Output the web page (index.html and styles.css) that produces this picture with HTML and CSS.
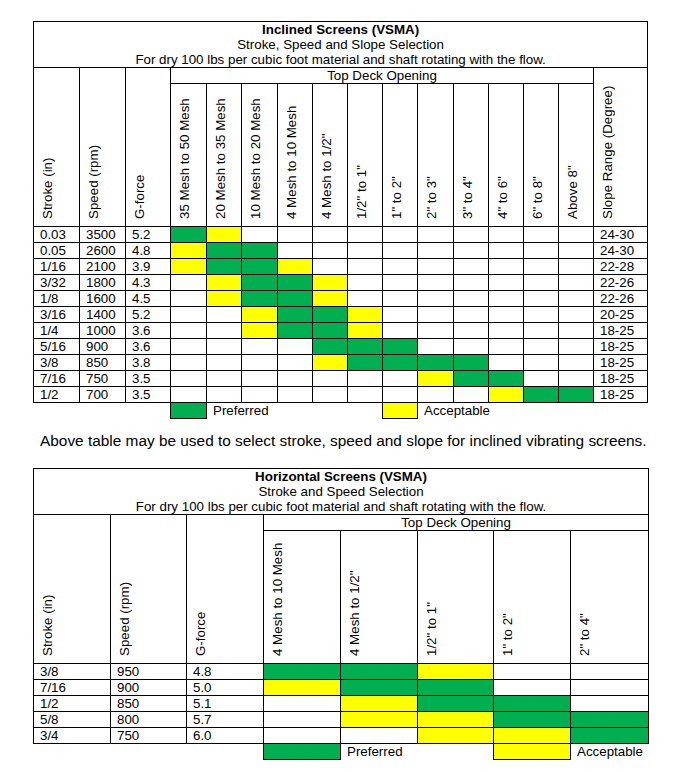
FILE: index.html
```html
<!DOCTYPE html>
<html>
<head>
<meta charset="utf-8">
<link rel="stylesheet" href="styles.css">
</head>
<body>
<div class="page">
  <table class="grid t1">
    <colgroup>
      <col style="width:46px"><col style="width:46px"><col style="width:45px">
      <col style="width:36px"><col style="width:35px"><col style="width:36px"><col style="width:35px">
      <col style="width:35px"><col style="width:35px"><col style="width:35px"><col style="width:36px">
      <col style="width:35px"><col style="width:35px"><col style="width:35px"><col style="width:35px">
      <col style="width:54px">
    </colgroup>
    <thead>
      <tr>
        <th colspan="16" class="title">
          <div class="b">Inclined Screens (VSMA)</div>
          <div>Stroke, Speed and Slope Selection</div>
          <div>For dry 100 lbs per cubic foot material and shaft rotating with the flow.</div>
        </th>
      </tr>
      <tr>
        <th rowspan="2" class="v"><div class="rot">Stroke (in)</div></th>
        <th rowspan="2" class="v"><div class="rot">Speed (rpm)</div></th>
        <th rowspan="2" class="v"><div class="rot">G-force</div></th>
        <th colspan="12" class="deck">Top Deck Opening</th>
        <th rowspan="2" class="v"><div class="rot">Slope Range (Degree)</div></th>
      </tr>
      <tr>
        <th class="v"><div class="rot">35 Mesh to 50 Mesh</div></th>
        <th class="v"><div class="rot">20 Mesh to 35 Mesh</div></th>
        <th class="v"><div class="rot">10 Mesh to 20 Mesh</div></th>
        <th class="v"><div class="rot">4 Mesh to 10 Mesh</div></th>
        <th class="v"><div class="rot">4 Mesh to 1/2"</div></th>
        <th class="v"><div class="rot">1/2" to 1"</div></th>
        <th class="v"><div class="rot">1" to 2"</div></th>
        <th class="v"><div class="rot">2" to 3"</div></th>
        <th class="v"><div class="rot">3" to 4"</div></th>
        <th class="v"><div class="rot">4" to 6"</div></th>
        <th class="v"><div class="rot">6" to 8"</div></th>
        <th class="v"><div class="rot">Above 8"</div></th>
      </tr>
    </thead>
    <tbody>
      <tr><td>0.03</td><td>3500</td><td>5.2</td><td class="g"></td><td class="y"></td><td></td><td></td><td></td><td></td><td></td><td></td><td></td><td></td><td></td><td></td><td>24-30</td></tr>
      <tr><td>0.05</td><td>2600</td><td>4.8</td><td class="y"></td><td class="g"></td><td class="g"></td><td></td><td></td><td></td><td></td><td></td><td></td><td></td><td></td><td></td><td>24-30</td></tr>
      <tr><td>1/16</td><td>2100</td><td>3.9</td><td class="y"></td><td class="g"></td><td class="g"></td><td class="y"></td><td></td><td></td><td></td><td></td><td></td><td></td><td></td><td></td><td>22-28</td></tr>
      <tr><td>3/32</td><td>1800</td><td>4.3</td><td></td><td class="y"></td><td class="g"></td><td class="g"></td><td class="y"></td><td></td><td></td><td></td><td></td><td></td><td></td><td></td><td>22-26</td></tr>
      <tr><td>1/8</td><td>1600</td><td>4.5</td><td></td><td class="y"></td><td class="g"></td><td class="g"></td><td class="y"></td><td></td><td></td><td></td><td></td><td></td><td></td><td></td><td>22-26</td></tr>
      <tr><td>3/16</td><td>1400</td><td>5.2</td><td></td><td></td><td class="y"></td><td class="g"></td><td class="g"></td><td class="y"></td><td></td><td></td><td></td><td></td><td></td><td></td><td>20-25</td></tr>
      <tr><td>1/4</td><td>1000</td><td>3.6</td><td></td><td></td><td class="y"></td><td class="g"></td><td class="g"></td><td class="y"></td><td></td><td></td><td></td><td></td><td></td><td></td><td>18-25</td></tr>
      <tr><td>5/16</td><td>900</td><td>3.6</td><td></td><td></td><td></td><td></td><td class="g"></td><td class="g"></td><td class="g"></td><td></td><td></td><td></td><td></td><td></td><td>18-25</td></tr>
      <tr><td>3/8</td><td>850</td><td>3.8</td><td></td><td></td><td></td><td></td><td class="y"></td><td class="g"></td><td class="g"></td><td class="g"></td><td class="g"></td><td></td><td></td><td></td><td>18-25</td></tr>
      <tr><td>7/16</td><td>750</td><td>3.5</td><td></td><td></td><td></td><td></td><td></td><td></td><td></td><td class="y"></td><td class="g"></td><td class="g"></td><td></td><td></td><td>18-25</td></tr>
      <tr><td>1/2</td><td>700</td><td>3.5</td><td></td><td></td><td></td><td></td><td></td><td></td><td></td><td></td><td></td><td class="y"></td><td class="g"></td><td class="g"></td><td>18-25</td></tr>
      <tr class="legend">
        <td colspan="3"></td>
        <td class="g box"></td>
        <td colspan="5" class="lt">Preferred</td>
        <td class="y box"></td>
        <td colspan="6" class="lt">Acceptable</td>
      </tr>
    </tbody>
  </table>

  <p class="note">Above table may be used to select stroke, speed and slope for inclined vibrating screens.</p>

  <table class="grid t2">
    <colgroup>
      <col style="width:77px"><col style="width:76px"><col style="width:77px"><col style="width:77px">
      <col style="width:77px"><col style="width:76px"><col style="width:77px"><col style="width:78px">
    </colgroup>
    <thead>
      <tr>
        <th colspan="8" class="title">
          <div class="b">Horizontal Screens (VSMA)</div>
          <div>Stroke and Speed Selection</div>
          <div>For dry 100 lbs per cubic foot material and shaft rotating with the flow.</div>
        </th>
      </tr>
      <tr>
        <th rowspan="2" class="v"><div class="rot">Stroke (in)</div></th>
        <th rowspan="2" class="v"><div class="rot">Speed (rpm)</div></th>
        <th rowspan="2" class="v"><div class="rot">G-force</div></th>
        <th colspan="5" class="deck">Top Deck Opening</th>
      </tr>
      <tr>
        <th class="v"><div class="rot">4 Mesh to 10 Mesh</div></th>
        <th class="v"><div class="rot">4 Mesh to 1/2"</div></th>
        <th class="v"><div class="rot">1/2" to 1"</div></th>
        <th class="v"><div class="rot">1" to 2"</div></th>
        <th class="v"><div class="rot">2" to 4"</div></th>
      </tr>
    </thead>
    <tbody>
      <tr><td>3/8</td><td>950</td><td>4.8</td><td class="g"></td><td class="g"></td><td class="y"></td><td></td><td></td></tr>
      <tr><td>7/16</td><td>900</td><td>5.0</td><td class="y"></td><td class="g"></td><td class="g"></td><td></td><td></td></tr>
      <tr><td>1/2</td><td>850</td><td>5.1</td><td></td><td class="y"></td><td class="g"></td><td class="g"></td><td></td></tr>
      <tr><td>5/8</td><td>800</td><td>5.7</td><td></td><td class="y"></td><td class="y"></td><td class="g"></td><td class="g"></td></tr>
      <tr><td>3/4</td><td>750</td><td>6.0</td><td></td><td></td><td class="y"></td><td class="y"></td><td class="g"></td></tr>
      <tr class="legend">
        <td colspan="3"></td>
        <td class="g box"></td>
        <td colspan="2" class="lt">Preferred</td>
        <td class="y box"></td>
        <td class="lt">Acceptable</td>
      </tr>
    </tbody>
  </table>
</div>
</body>
</html>
```

FILE: styles.css
```css
html, body {
  margin: 0;
  padding: 0;
  background: #ffffff;
}

.page {
  padding: 21px 0 0 33px;
  font-family: "Liberation Sans", Arial, sans-serif;
  font-size: 13.33px;
  color: #000;
}

.grid {
  border-collapse: collapse;
  table-layout: fixed;
  width: 615px;
}

.grid th,
.grid td {
  border: 1px solid #000;
  padding: 0 6px;
  height: 15px;
  line-height: 15px;
  font-weight: normal;
  white-space: nowrap;
  text-align: left;
  overflow: visible;
}

.grid th.title {
  text-align: center;
  padding: 0;
  line-height: 15px;
}

.grid th.title .b {
  font-weight: bold;
}

.grid th.deck {
  text-align: center;
  padding: 0;
}

.grid th.v {
  vertical-align: bottom;
  padding: 0 0 7px 6px;
  height: auto;
}

.rot {
  writing-mode: vertical-rl;
  transform: rotate(180deg);
  text-align: start;
  white-space: nowrap;
  line-height: 15px;
}

.t1 .rot {
  height: 135px;
}

.t2 .rot {
  height: 125px;
}

.grid td.g {
  background: #00b050;
}

.grid td.y {
  background: #ffff00;
}

.grid tr.legend td {
  border: none;
}

.grid tr.legend td.box {
  border: 1px solid #000;
}

.grid tr.legend td.lt {
  padding-left: 6px;
}

.note {
  margin: 13px 0 18px 7px;
  font-size: 15.4px;
  line-height: 18px;
}
```
